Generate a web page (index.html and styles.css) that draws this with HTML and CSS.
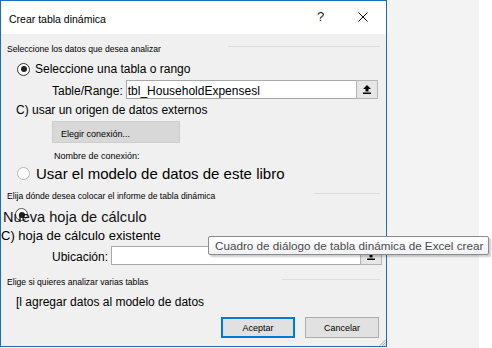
FILE: index.html
```html
<!DOCTYPE html>
<html lang="es">
<head>
  <meta charset="UTF-8">
  <title>Crear tabla dinámica</title>
  <link rel="stylesheet" href="styles.css">
</head>
<body>
  <div class="screen">
    <div class="dialog">
      <!-- Title bar -->
      <div class="titlebar">
        <span class="title">Crear tabla dinámica</span>
        <span class="help">?</span>
        <svg class="close" width="10" height="10" viewBox="0 0 10 10">
          <path d="M0.5 0.5 L9.5 9.5 M9.5 0.5 L0.5 9.5" stroke="#000" stroke-width="1" fill="none"/>
        </svg>
      </div>

      <div class="content">
        <!-- Source data -->
        <div class="section s1">
          <span>Seleccione los datos que desea analizar</span>
          <span class="rule rule1"></span>
        </div>

        <div class="radio-row r1">
          <span class="radio checked"></span>
          <span>Seleccione una tabla o rango</span>
        </div>

        <div class="field-row range">
          <span class="field-label">Table/Range:</span>
          <div class="input range-input">
            <span class="input-text">tbl_HouseholdExpensesl</span>
          </div>
          <span class="pick">
            <svg width="8" height="9" viewBox="0 0 8 9">
              <path d="M4 0 L8 4 L5.5 4 L5.5 6.5 L2.5 6.5 L2.5 4 L0 4 Z" fill="#000"/>
              <rect x="0" y="7.5" width="8" height="1.5" fill="#000"/>
            </svg>
          </span>
        </div>

        <div class="plain-row ext">C) usar un origen de datos externos</div>

        <button class="conn-btn">Elegir conexión...</button>

        <div class="small-row conn-name">Nombre de conexión:</div>

        <div class="radio-row big r2">
          <span class="radio"></span>
          <span>Usar el modelo de datos de este libro</span>
        </div>

        <!-- Destination -->
        <div class="section s2">
          <span>Elija dónde desea colocar el informe de tabla dinámica</span>
          <span class="rule rule2"></span>
        </div>

        <div class="new-sheet">
          <span class="radio checked under"></span>
          <span class="new-text">Nueva hoja de cálculo</span>
        </div>

        <div class="plain-row existing">C) hoja de cálculo existente</div>

        <div class="field-row ubic">
          <span class="field-label">Ubicación:</span>
          <div class="input ubic-input"></div>
          <span class="pick">
            <svg width="8" height="9" viewBox="0 0 8 9">
              <path d="M4 0 L8 4 L5.5 4 L5.5 6.5 L2.5 6.5 L2.5 4 L0 4 Z" fill="#000"/>
              <rect x="0" y="7.5" width="8" height="1.5" fill="#000"/>
            </svg>
          </span>
          <div class="tooltip">Cuadro de diálogo de tabla dinámica de Excel crear</div>
        </div>

        <!-- Multiple tables -->
        <div class="section s3">
          <span>Elige si quieres analizar varias tablas</span>
          <span class="rule rule3"></span>
        </div>

        <div class="plain-row add">[l agregar datos al modelo de datos</div>

        <div class="buttons">
          <button class="btn default">Aceptar</button>
          <button class="btn">Cancelar</button>
        </div>

        <svg class="grip" width="7" height="7" viewBox="0 0 7 7">
          <path d="M6.5 1 L1 6.5 M6.5 3.5 L3.5 6.5 M6.5 5.5 L5.5 6.5" stroke="#a0a0a0" stroke-width="1" fill="none"/>
        </svg>
      </div>
    </div>
    <div class="side"></div>
  </div>
</body>
</html>
```

FILE: styles.css
```css
/* General styles */
body {
  margin: 0;
  background-color: #ffffff;
  font-family: "Liberation Sans", Arial, sans-serif;
  color: #000;
}

.screen {
  display: flex;
  width: 492px;
  height: 348px;
}

/* Dialog frame */
.dialog {
  width: 385px;
  height: 345px;
  border: 1px solid #1c6dbd;
  background-color: #f0f0f0;
  display: flex;
  flex-direction: column;
}

.side {
  width: 92px;
  height: 348px;
  background-color: #f3f3f3;
}

/* Title bar */
.titlebar {
  height: 25px;
  padding-top: 8px;
  background-color: #ffffff;
  display: flex;
  align-items: flex-start;
  position: relative;
}

.title {
  margin-left: 8px;
  font-size: 10.5px;
  line-height: 20px;
}

.help {
  position: absolute;
  left: 316px;
  top: 9px;
  font-size: 13px;
  line-height: 14px;
  color: #222;
}

.close {
  position: absolute;
  left: 357px;
  top: 11px;
}

/* Content */
.content {
  flex: 1;
  display: flex;
  flex-direction: column;
  position: relative;
}

.section {
  height: 14px;
  line-height: 14px;
  font-size: 8.6px;
  margin-left: 6px;
  padding-right: 6px;
  display: flex;
  align-items: flex-start;
  flex-shrink: 0;
}

.rule {
  margin-left: auto;
  margin-top: 4px;
  height: 1px;
  background-color: #dcdcdc;
}

.rule1 { width: 152px; }
.rule2 { width: 66px; }
.rule3 { width: 98px; }

.s1 { margin-top: 8px; }
.s2 { margin-top: 7px; }
.s3 { margin-top: 11px; }

/* Radios */
.radio-row {
  display: flex;
  align-items: center;
  height: 18px;
  font-size: 12px;
  margin-left: 16px;
  flex-shrink: 0;
}

.radio {
  width: 11px;
  height: 11px;
  border: 1px solid #333;
  border-radius: 50%;
  background-color: #fff;
  display: flex;
  align-items: center;
  justify-content: center;
  margin-right: 5px;
  flex-shrink: 0;
}

.radio.checked::after {
  content: "";
  width: 6px;
  height: 6px;
  border-radius: 50%;
  background-color: #222;
}

.r1 { margin-top: 4px; }

.r2 {
  margin-top: 2px;
  font-size: 15px;
}

.r2 .radio {
  border-color: #b4b4b4;
  margin-right: 6px;
}

/* Fields */
.field-row {
  display: flex;
  height: 18px;
  font-size: 12px;
  position: relative;
  flex-shrink: 0;
}

.field-label {
  line-height: 18px;
  padding-top: 2px;
  margin-right: 3px;
}

.input {
  height: 17px;
  border: 1px solid #a8a8a8;
  border-right: none;
  background-color: #fff;
}

.input-text {
  display: block;
  line-height: 18px;
  padding-top: 1px;
  padding-left: 1px;
}

.pick {
  width: 20px;
  height: 17px;
  border: 1px solid #b4b4b4;
  background-color: #e6e6e6;
  display: flex;
  align-items: center;
  justify-content: center;
}

.range {
  margin-top: 2px;
  margin-left: 51px;
}

.range-input { width: 229px; }

.ubic {
  margin-top: 2px;
  margin-left: 51px;
}

.ubic-input { width: 248px; }

.plain-row {
  height: 16px;
  line-height: 16px;
  font-size: 12px;
  flex-shrink: 0;
}

.ext {
  margin-top: 4px;
  margin-left: 15px;
}

.conn-btn {
  margin-top: 3px;
  margin-left: 51px;
  width: 128px;
  height: 22px;
  padding: 3px 0 0 8px;
  border: 1px solid #cfcfcf;
  background-color: #d8d8d8;
  font-family: inherit;
  font-size: 9px;
  text-align: left;
  color: #000;
  flex-shrink: 0;
}

.small-row {
  height: 12px;
  line-height: 12px;
  font-size: 9px;
  flex-shrink: 0;
}

.conn-name {
  margin-top: 7px;
  margin-left: 53px;
}

/* Destination */
.new-sheet {
  margin-top: 5px;
  height: 18px;
  position: relative;
  flex-shrink: 0;
}

.new-text {
  position: relative;
  margin-left: 2px;
  font-size: 14.6px;
  line-height: 18px;
  color: #111;
}

.radio.under {
  position: absolute;
  left: 14px;
  top: 0;
  border-color: #555;
}

.existing {
  margin-top: 2px;
  font-size: 13px;
}

.tooltip {
  position: absolute;
  left: 156px;
  top: -10px;
  width: 273px;
  height: 17px;
  padding-left: 6px;
  border: 1px solid #8c8c8c;
  border-radius: 2px;
  background: linear-gradient(#ffffff, #f1f2f7);
  box-shadow: 2px 2px 2px rgba(0, 0, 0, 0.2);
  font-size: 11.7px;
  line-height: 18px;
  color: #4a4a4a;
  white-space: nowrap;
}

.add {
  margin-top: 4px;
  margin-left: 15px;
  height: 18px;
  line-height: 18px;
}

/* Buttons */
.buttons {
  margin-top: 6px;
  display: flex;
  gap: 10px;
  margin-left: 220px;
  flex-shrink: 0;
}

.btn {
  width: 74px;
  height: 21px;
  padding: 0;
  border: 1px solid #adadad;
  background-color: #e1e1e1;
  font-family: inherit;
  font-size: 9px;
  color: #000;
}

.btn.default {
  width: 74px;
  border: 2px solid #0078d7;
}

.grip {
  position: absolute;
  right: 0;
  bottom: 0;
}
```
